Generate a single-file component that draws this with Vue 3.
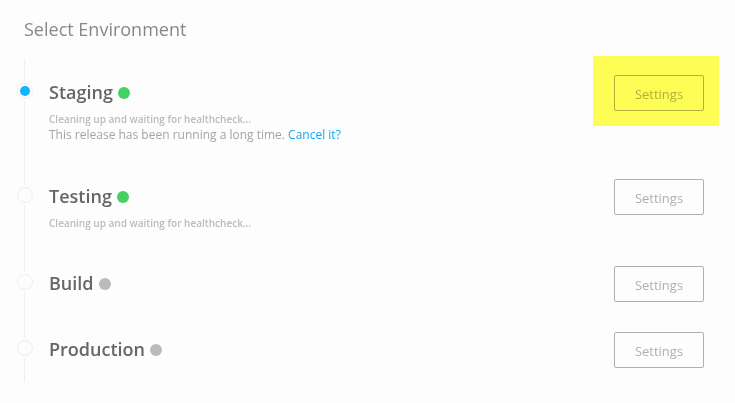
<script setup>
const environments = [
  {
    name: 'Staging',
    active: true,
    healthy: true,
    status: 'Cleaning up and waiting for healthcheck...',
    longRunning: true,
    highlighted: true,
  },
  { name: 'Testing', healthy: true, status: 'Cleaning up and waiting for healthcheck...' },
  { name: 'Build' },
  { name: 'Production' },
]
</script>

<template>
  <main class="page">
    <h1 class="title">Select Environment</h1>
    <ol class="environments">
      <li v-for="env in environments" :key="env.name" class="environment">
        <div class="rail">
          <span class="line line-top"></span>
          <span class="node" :class="{ active: env.active }"></span>
          <span class="line line-bottom"></span>
        </div>
        <div class="details">
          <h2 class="name">
            {{ env.name }}
            <span class="health" :class="{ healthy: env.healthy }"></span>
          </h2>
          <p v-if="env.status" class="status">{{ env.status }}</p>
          <p v-if="env.longRunning" class="notice">
            This release has been running a long time. <a href="#">Cancel it?</a>
          </p>
        </div>
        <div class="action" :class="{ highlighted: env.highlighted }">
          <button type="button" class="settings">Settings</button>
        </div>
      </li>
    </ol>
  </main>
</template>

<style>
body {
  background: #fdfdfd;
}
</style>

<style scoped>
.page {
  padding: 17px 31px 21px 17px;
  font-family: "Open Sans", "Noto Sans", sans-serif;
  color: #a4a4a4;
}

.title {
  margin: 0 0 18px 7px;
  font-size: 18px;
  line-height: 24px;
  font-weight: 400;
  color: #888;
}

.environments {
  margin: 0;
  padding: 0;
  list-style: none;
}

.environment {
  display: flex;
  align-items: flex-start;
}

.rail {
  display: flex;
  flex-direction: column;
  align-self: stretch;
  gap: 2px;
  width: 16px;
}

.line {
  width: 1px;
  margin-left: 7px;
  background: #eee;
}

.line-top {
  height: 22px;
}

.line-bottom {
  flex: 1;
}

.node {
  box-sizing: border-box;
  width: 16px;
  height: 16px;
  border: 1px solid #eee;
  border-radius: 50%;
}

.node.active {
  padding: 2px;
  background: #0fb4ff content-box;
}

.details {
  flex: 1;
  padding: 21px 16px 20px 16px;
}

.name {
  display: flex;
  align-items: center;
  gap: 5px;
  margin: 0;
  font-size: 18px;
  line-height: 24px;
  font-weight: 600;
  color: #666;
}

.health {
  width: 12px;
  height: 12px;
  margin-top: 2px;
  border-radius: 50%;
  background: #bbb;
}

.health.healthy {
  background: #43d163;
}

.status {
  margin: 8px 0 0;
  font-size: 10px;
  line-height: 14px;
  font-weight: 600;
  color: #bbb;
}

.notice {
  margin: 0;
  font-size: 12px;
  line-height: 17px;
}

.notice a {
  color: #0fa9f5;
  text-decoration: none;
}

.action {
  position: relative;
  padding: 16px 0 14px;
}

.settings {
  display: block;
  width: 90px;
  height: 36px;
  padding: 2px 0 0;
  border: 1px solid #b0b0b0;
  border-radius: 2px;
  background: transparent;
  font: 400 13px/18px "Open Sans", "Noto Sans", sans-serif;
  color: #b0b0b0;
  cursor: pointer;
}

/* Marker over the settings button */
.highlighted::after {
  content: "";
  position: absolute;
  inset: -3px -15px -1px -21px;
  background: #ffff55;
  mix-blend-mode: multiply;
  pointer-events: none;
}
</style>
